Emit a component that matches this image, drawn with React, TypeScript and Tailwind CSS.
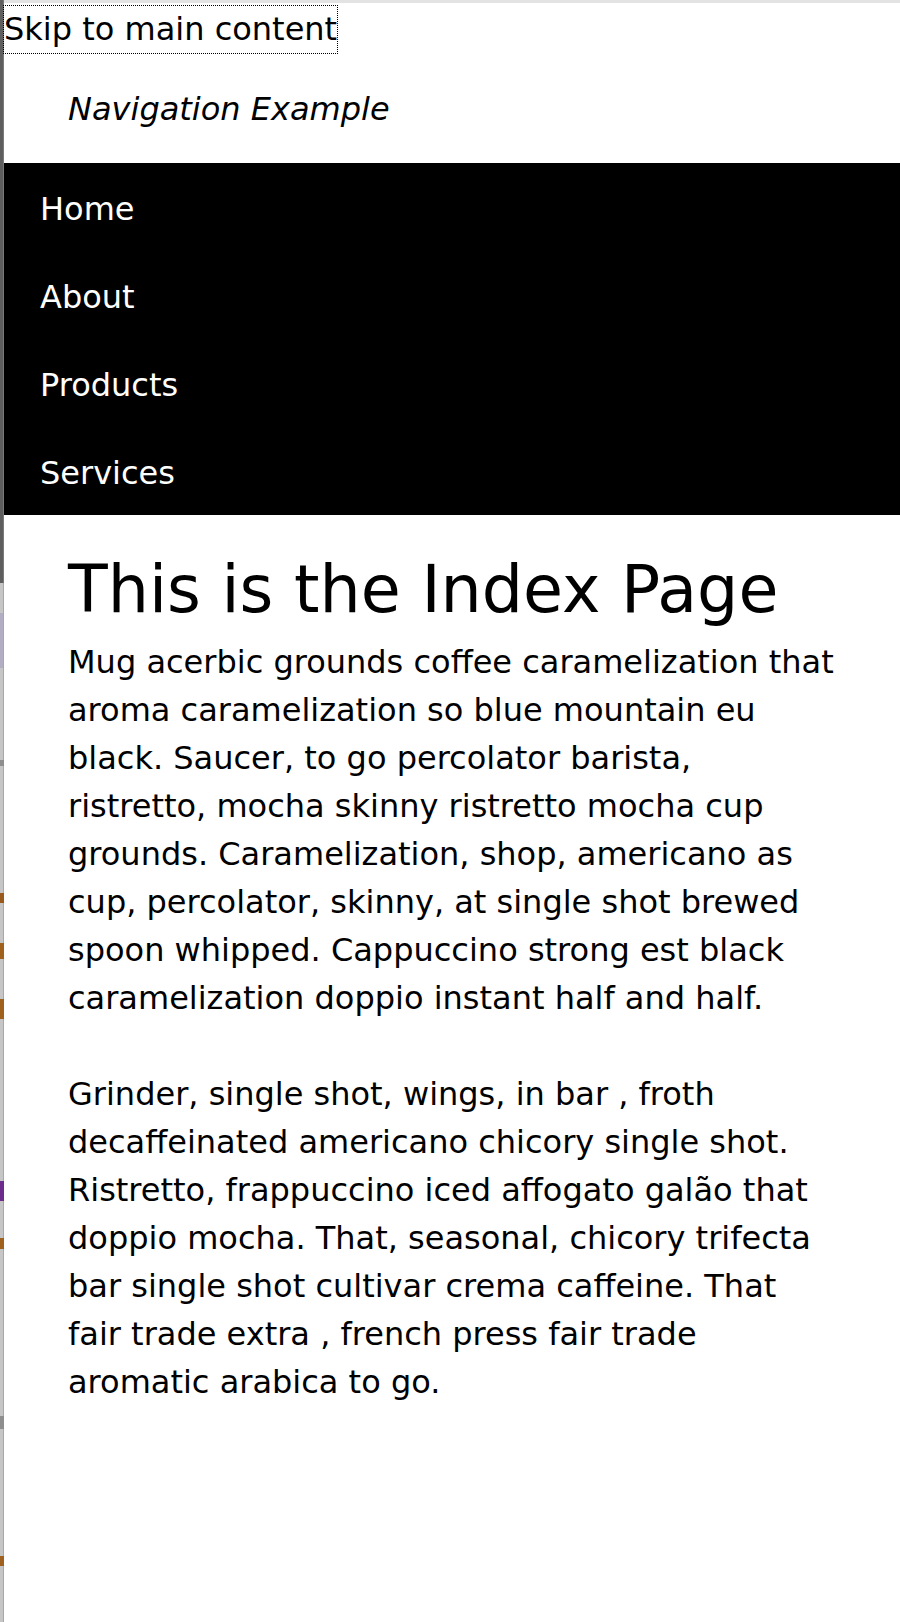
import React from "react";

const navItems = ["Home", "About", "Products", "Services"];

export default function App() {
  return (
    <div
      className="flex min-h-[1622px] bg-white text-black text-[32px]"
      style={{ fontFamily: '"DejaVu Sans", Verdana, sans-serif' }}
    >
      {/* strip of the window behind */}
      <div className="w-[4px] shrink-0 flex flex-col">
        <div className="h-[583px] bg-[#5e5e5e] border-r border-[#7a7a7a]" />
        <div className="h-[30px] bg-[#c6c6c6] border-r border-[#a8a8a8]" />
        <div className="h-[55px] bg-[#b3adc3] border-r border-[#a8a8a8]" />
        <div className="h-[92px] bg-[#c6c6c6] border-r border-[#a8a8a8]" />
        <div className="h-[6px] bg-[#8e8e8e]" />
        <div className="h-[127px] bg-[#c6c6c6] border-r border-[#a8a8a8]" />
        <div className="h-[10px] bg-[#9a5a1e]" />
        <div className="h-[40px] bg-[#c6c6c6] border-r border-[#a8a8a8]" />
        <div className="h-[16px] bg-[#a0601e]" />
        <div className="h-[40px] bg-[#c6c6c6] border-r border-[#a8a8a8]" />
        <div className="h-[20px] bg-[#a0601e]" />
        <div className="h-[162px] bg-[#c6c6c6] border-r border-[#a8a8a8]" />
        <div className="h-[20px] bg-[#6b2c8c]" />
        <div className="h-[37px] bg-[#c6c6c6] border-r border-[#a8a8a8]" />
        <div className="h-[11px] bg-[#a0601e]" />
        <div className="h-[167px] bg-[#c6c6c6] border-r border-[#a8a8a8]" />
        <div className="h-[13px] bg-[#8e8e8e]" />
        <div className="h-[127px] bg-[#c6c6c6] border-r border-[#a8a8a8]" />
        <div className="h-[10px] bg-[#a0601e]" />
        <div className="flex-1 bg-[#c6c6c6] border-r border-[#a8a8a8]" />
      </div>

      <div className="flex-1 flex flex-col border-t-[3px] border-[#e3e3e3]">
        <div className="pt-[2px]">
          <a
            href="#main"
            className="inline-block leading-[47px] text-black no-underline outline-1 outline-dotted outline-black"
          >
            Skip to main content
          </a>
        </div>

        <header className="mt-[32px] pl-[64px]">
          <p className="italic leading-[48px]">Navigation Example</p>
        </header>

        <nav className="mt-[30px] bg-black">
          <ul>
            {navItems.map((item) => (
              <li key={item} className="pl-[36px] pt-[22px] pb-[18px] leading-[48px]">
                <a href="#" className="text-white no-underline">
                  {item}
                </a>
              </li>
            ))}
          </ul>
        </nav>

        <main id="main" className="px-16 pt-[27px] leading-[48px]">
          <h1 className="text-[65px] leading-[96px] font-normal">This is the Index Page</h1>
          <p>
            Mug acerbic grounds coffee caramelization that aroma caramelization so blue mountain eu
            black. Saucer, to go percolator barista, ristretto, mocha skinny ristretto mocha cup
            grounds. Caramelization, shop, americano as cup, percolator, skinny, at single shot
            brewed spoon whipped. Cappuccino strong est black caramelization doppio instant half and
            half.
          </p>
          <p className="mt-[48px]">
            Grinder, single shot, wings, in bar , froth decaffeinated americano chicory single shot.
            Ristretto, frappuccino iced affogato galão that doppio mocha. That, seasonal, chicory
            trifecta bar single shot cultivar crema caffeine. That fair trade extra , french press
            fair trade aromatic arabica to go.
          </p>
        </main>
      </div>
    </div>
  );
}
